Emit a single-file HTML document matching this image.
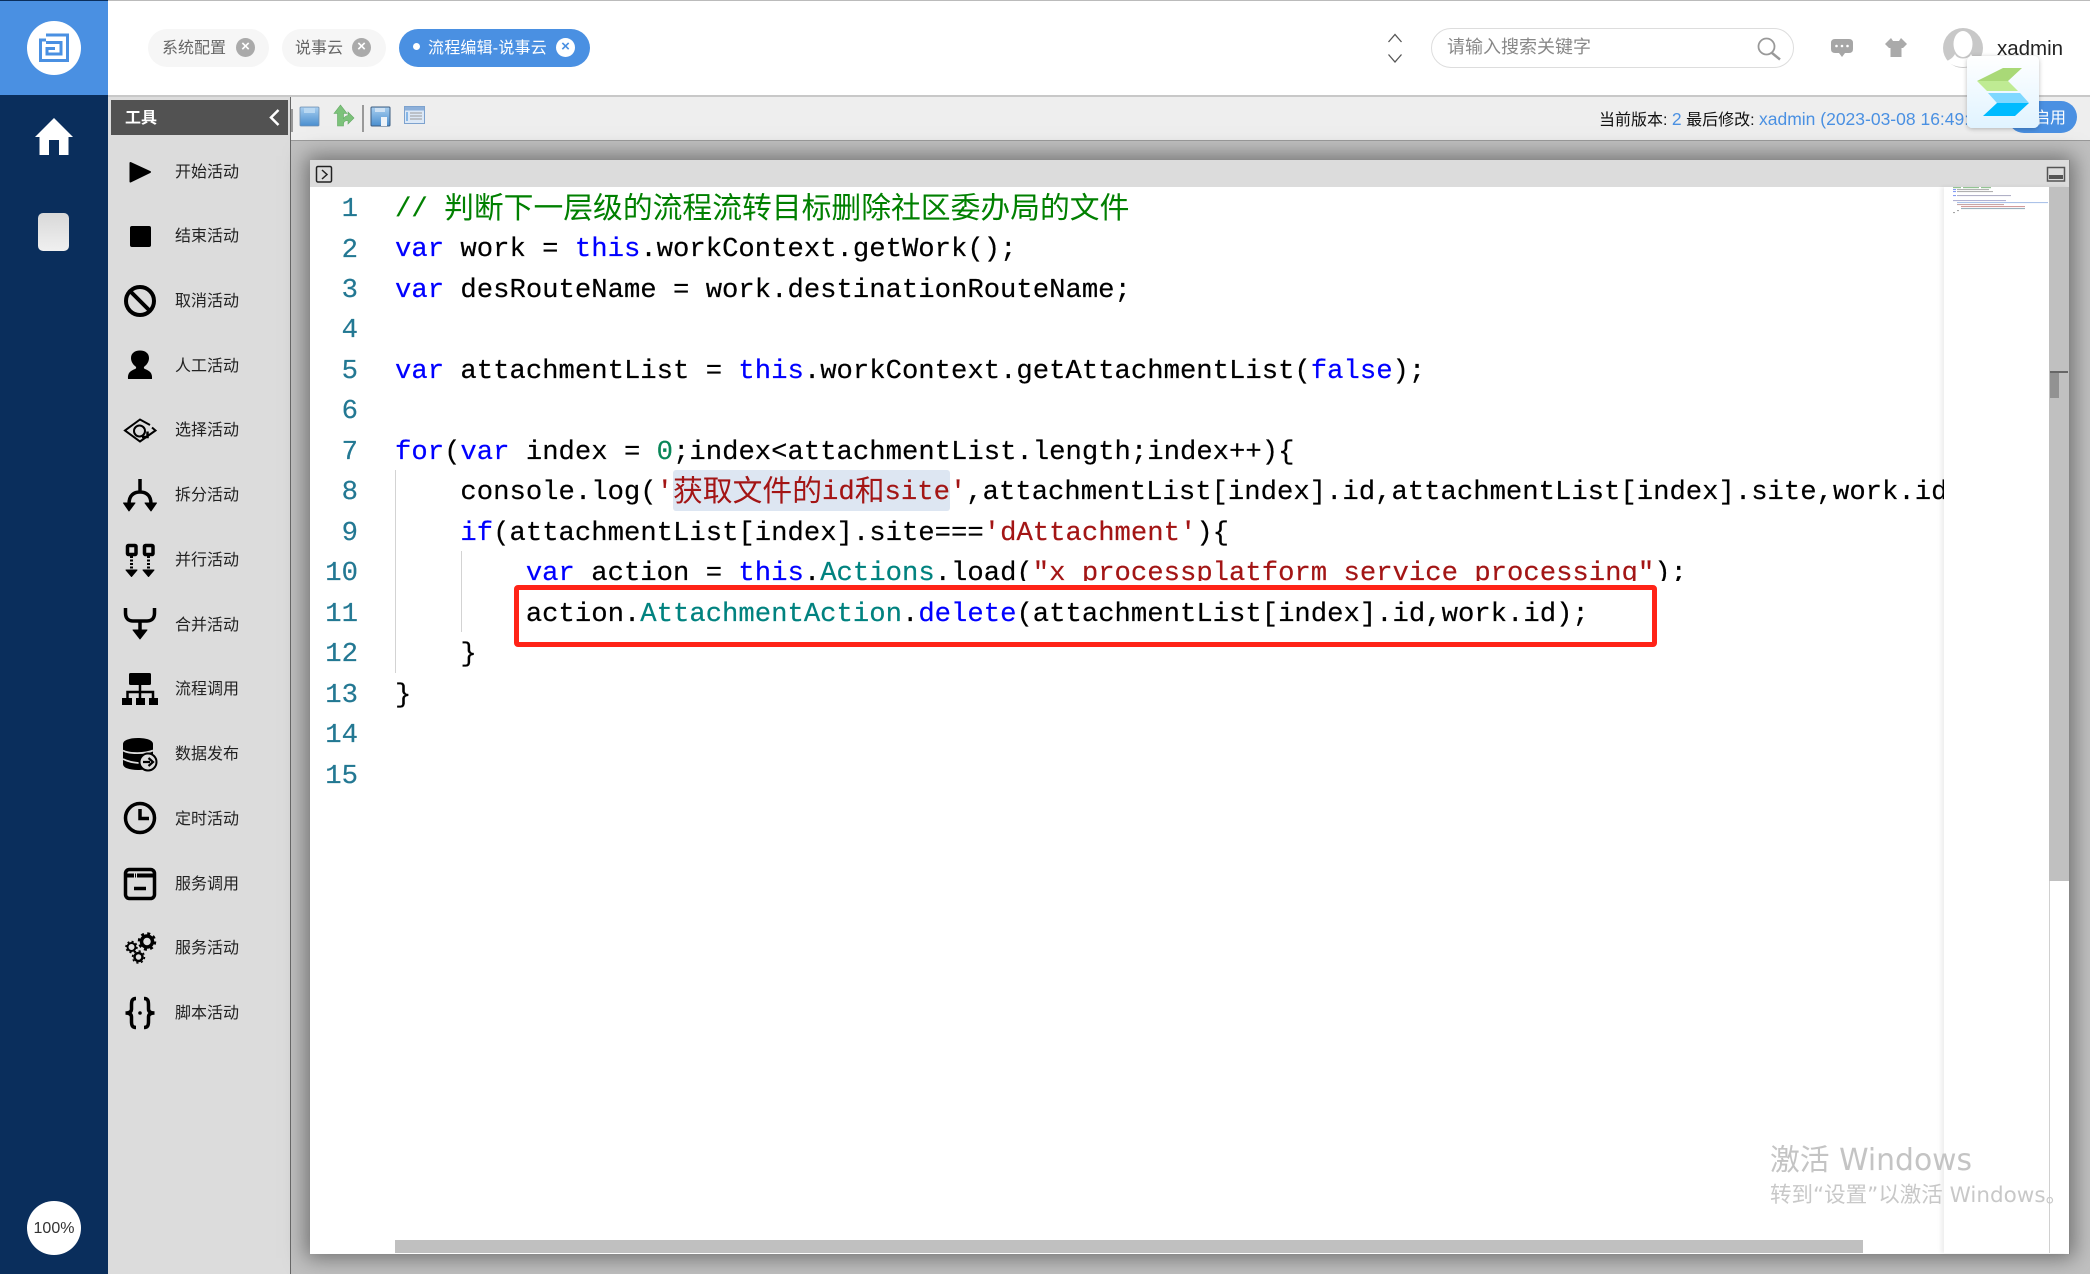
<!DOCTYPE html>
<html lang="zh"><head><meta charset="utf-8"><title>流程编辑-说事云</title>
<style>
html,body{margin:0;padding:0;background:#c0c0c0}
body{width:2090px;height:1274px;position:relative;overflow:hidden;font-family:"Liberation Sans","Noto Sans CJK SC",sans-serif;color:#333}
.a{position:absolute}
.t{position:absolute;white-space:pre;line-height:1}
.tab{position:absolute;top:29px;height:38px;border-radius:19px;background:#f6f6f6}
.tab span{position:absolute;top:10px;font-size:16px;line-height:20px;color:#666;white-space:nowrap}
.x{position:absolute;top:9px;width:19px;height:19px;border-radius:50%;background:#aaa;color:#fff;font-size:15px;line-height:18px;text-align:center;font-weight:bold}
.item{position:absolute;left:175px;font-size:16px;line-height:20px;color:#222;white-space:nowrap}
.ln{position:absolute;left:310px;width:48px;height:40px;text-align:right;font:27.25px/40px "Liberation Mono",monospace;color:#237893;-webkit-text-stroke:.2px #237893}
.code{position:absolute;left:395px;height:40px;white-space:pre;font:27.25px/40px "Liberation Mono","Noto Sans CJK SC",monospace;color:#000;-webkit-text-stroke:.2px}
.c{font-family:"Noto Sans CJK SC",sans-serif;font-size:29.8px;line-height:0;-webkit-text-stroke:0;position:relative;top:1.500px}
.k{color:#0000ff}.g{color:#008000}.s{color:#a31515}.n{color:#098658}.y{color:#00827f}
</style></head><body>

<div class="a" style="left:0;top:0;width:2090px;height:97px;background:#fff"></div>
<div class="a" style="left:0;top:0;width:2090px;height:1px;background:#bbb"></div>
<div class="a" style="left:108px;top:95px;width:1982px;height:2px;background:#c8c8c8"></div>

<!-- left rail -->
<div class="a" style="left:0;top:0;width:108px;height:1274px;background:#0a2e5c"></div>
<div class="a" style="left:0;top:1px;width:108px;height:94px;background:#4a90e2"></div>
<div class="a" style="left:27px;top:21px;width:54px;height:54px;border-radius:50%;background:#fff"></div>
<div class="a" style="left:38px;top:213px;width:31px;height:38px;border-radius:5px;background:linear-gradient(#d8d8d8,#f0f0f0)"></div>
<div class="a" style="left:27px;top:1201px;width:54px;height:54px;border-radius:50%;background:#fff;text-align:center;font-size:16px;line-height:55px;color:#333">100%</div>

<!-- tool panel -->
<div class="a" style="left:108px;top:97px;width:182px;height:1177px;background:#dcdcdc"></div>
<div class="a" style="left:290px;top:97px;width:1px;height:1177px;background:#666"></div>
<div class="a" style="left:111px;top:100px;width:177px;height:35px;background:#525252"></div>
<div class="t" style="left:125px;top:111px;font-size:16px;color:#fff;font-weight:bold">工具</div>

<div class="item" style="top:163px">开始活动</div>
<div class="item" style="top:227px">结束活动</div>
<div class="item" style="top:292px">取消活动</div>
<div class="item" style="top:357px">人工活动</div>
<div class="item" style="top:421px">选择活动</div>
<div class="item" style="top:486px">拆分活动</div>
<div class="item" style="top:551px">并行活动</div>
<div class="item" style="top:616px">合并活动</div>
<div class="item" style="top:680px">流程调用</div>
<div class="item" style="top:745px">数据发布</div>
<div class="item" style="top:810px">定时活动</div>
<div class="item" style="top:875px">服务调用</div>
<div class="item" style="top:939px">服务活动</div>
<div class="item" style="top:1004px">脚本活动</div>

<!-- toolbar -->
<div class="a" style="left:291px;top:97px;width:1799px;height:43px;background:#eee"></div>
<div class="a" style="left:291px;top:140px;width:1799px;height:1px;background:#999"></div>
<div class="t" style="left:1599px;top:111px;font-size:16px;color:#111;width:368px;overflow:hidden">当前版本: <span style="color:#4a90e2;font-size:17.5px">2</span> 最后修改: <span style="color:#4a90e2;font-size:17.5px">xadmin (2023-03-08 16:49:12)</span></div>
<div class="a" style="left:2008px;top:101px;width:69px;height:32px;border-radius:16px;background:#4a90e2"></div>
<div class="t" style="left:2034px;top:111px;font-size:16px;color:#fff">启用</div>

<!-- tabs -->
<div class="tab" style="left:148px;width:121px"><span style="left:14px">系统配置</span><div class="x" style="left:88px">×</div></div>
<div class="tab" style="left:282px;width:104px"><span style="left:13px">说事云</span><div class="x" style="left:70px">×</div></div>
<div class="tab" style="left:399px;width:191px;background:#4a90e2"><span style="left:29px;color:#fff;letter-spacing:.2px">流程编辑-说事云</span><div class="x" style="left:157px;background:#fff;color:#4a90e2">×</div>
<div class="a" style="left:14px;top:14px;width:7px;height:7px;border-radius:50%;background:#fff"></div></div>

<!-- search -->
<div class="a" style="left:1431px;top:28px;width:361px;height:38px;border:1px solid #ddd;border-radius:20px;background:#fff"></div>
<div class="t" style="left:1447px;top:38px;font-size:18px;color:#888">请输入搜索关键字</div>
<div class="t" style="left:1997px;top:39px;font-size:20.5px;color:#222">xadmin</div>

<!-- editor -->
<div class="a" style="left:310px;top:160px;width:1759px;height:1094px;background:#fff;box-shadow:0 0 20px 4px #6f6f6f;border-right:1px solid #888"></div>
<div class="a" style="left:310px;top:160px;width:1759px;height:27px;background:#dcdcdc"></div>

<div class="a" style="left:395px;top:470px;width:1px;height:203px;background:#d3d3d3"></div>
<div class="a" style="left:461px;top:551px;width:1px;height:81px;background:#d3d3d3"></div>
<div class="a" style="left:673px;top:470px;width:277px;height:41px;background:#dde6f2;border-radius:3px"></div>

<div class="ln" style="top:190px">1</div>
<div class="ln" style="top:231px">2</div>
<div class="ln" style="top:271px">3</div>
<div class="ln" style="top:311px">4</div>
<div class="ln" style="top:352px">5</div>
<div class="ln" style="top:392px">6</div>
<div class="ln" style="top:433px">7</div>
<div class="ln" style="top:473px">8</div>
<div class="ln" style="top:514px">9</div>
<div class="ln" style="top:554px">10</div>
<div class="ln" style="top:595px">11</div>
<div class="ln" style="top:635px">12</div>
<div class="ln" style="top:676px">13</div>
<div class="ln" style="top:716px">14</div>
<div class="ln" style="top:757px">15</div>

<div class="a" style="left:395px;top:187px;width:1549px;height:1050px;overflow:hidden">
<div class="code" style="left:0;top:3px"><span class="g">// <span class="c">判断下一层级的流程流转目标删除社区委办局的文件</span></span></div>
<div class="code" style="left:0;top:43px"><span class="k">var</span> work = <span class="k">this</span>.workContext.getWork();</div>
<div class="code" style="left:0;top:84px"><span class="k">var</span> desRouteName = work.destinationRouteName;</div>
<div class="code" style="left:0;top:165px"><span class="k">var</span> attachmentList = <span class="k">this</span>.workContext.getAttachmentList(<span class="k">false</span>);</div>
<div class="code" style="left:0;top:246px"><span class="k">for</span>(<span class="k">var</span> index = <span class="n">0</span>;index&lt;attachmentList.length;index++){</div>
<div class="code" style="left:0;top:286px">    console.log(<span class="s">'<span class="c">获取文件的</span>id<span class="c">和</span>site'</span>,attachmentList[index].id,attachmentList[index].site,work.id);</div>
<div class="code" style="left:0;top:327px">    <span class="k">if</span>(attachmentList[index].site===<span class="s">'dAttachment'</span>){</div>
<div class="code" style="left:0;top:367px;height:27px;overflow:hidden">        <span class="k">var</span> action = <span class="k">this</span>.<span class="y">Actions</span>.load(<span class="s">"x_processplatform_service_processing"</span>);</div>
<div class="code" style="left:0;top:408px">        action.<span class="y">AttachmentAction</span>.<span class="k">delete</span>(attachmentList[index].id,work.id);</div>
<div class="code" style="left:0;top:448px">    }</div>
<div class="code" style="left:0;top:489px">}</div>
</div>

<div class="a" style="left:514px;top:585px;width:1133px;height:52px;border:5px solid #ff2317;border-radius:4px"></div>

<!-- minimap + scrollbars -->
<div class="a" style="left:1944px;top:187px;width:125px;height:1066px;background:#fff;box-shadow:-3px 0 4px rgba(0,0,0,.07)"></div>
<div class="a" style="left:2049px;top:187px;width:1px;height:1066px;background:#d0d0d0"></div>
<div class="a" style="left:2049px;top:187px;width:20px;height:694px;background:#c0c0c0"></div>
<div class="a" style="left:2050px;top:371px;width:18px;height:2px;background:#666"></div>
<div class="a" style="left:2050px;top:373px;width:9px;height:25px;background:#929292"></div>
<div class="a" style="left:395px;top:1240px;width:1468px;height:13px;background:#c0c0c0"></div>

<svg class="a" style="left:0;top:0" width="2090" height="1274" viewBox="0 0 2090 1274">
<!-- logo -->
<g fill="none" stroke="#4a90e2" stroke-width="3"><path d="M46 35H67.500V60.500H40.500V40H46"/><path d="M46 42.500H61V54H47V48.500H55"/></g>
<!-- home -->
<path fill="#fff" d="M54 118L73 137H68.500V155H59V140H49V155H39.500V137H35Z"/>
<!-- chevrons -->
<path d="M278.500 110L271 117.500L278.500 125" fill="none" stroke="#fff" stroke-width="2.500"/>
<path d="M1388.500 42L1395 34.500L1401.500 42M1388.500 54.500L1395 62L1401.500 54.500" fill="none" stroke="#555" stroke-width="1.300"/>
<!-- search icon -->
<circle cx="1766.500" cy="46.500" r="8" fill="none" stroke="#999" stroke-width="1.800"/><path d="M1772 53L1780 59.500" stroke="#999" stroke-width="2.500"/>
<!-- chat -->
<path fill="#a6a6a6" d="M1835 39H1849Q1853 39 1853 43V49Q1853 53 1849 53H1845L1842 57L1839 53H1835Q1831 53 1831 49V43Q1831 39 1835 39Z"/>
<g fill="#fff"><circle cx="1836.500" cy="46" r="1.300"/><circle cx="1842" cy="46" r="1.300"/><circle cx="1847.500" cy="46" r="1.300"/></g>
<!-- shirt -->
<path fill="#aaa" d="M1891 38L1893 41H1899L1901 38L1907 44L1903 48H1901.500V57H1890.500V48H1889L1885 44Z"/>
<!-- avatar -->
<circle cx="1963" cy="48" r="20" fill="#c8c8c8"/>
<ellipse cx="1963" cy="44" rx="9.500" ry="13" fill="#fff"/>
<path d="M1955 54C1957 60 1969 60 1971 54C1973 58 1977 60 1979 61C1975 65 1969 67 1963 67C1957 67 1951 65 1947 61C1949 60 1953 58 1955 54Z" fill="#fff"/>

<!-- tool icons -->
<g fill="#000" stroke="none">
<path d="M130.500 163L150 172L130.500 181.500Z" stroke="#000" stroke-width="2" stroke-linejoin="round"/>
<rect x="130" y="226" width="21" height="21" rx="2"/>
<path d="M128 379C127.500 373 130 371 135 369C136.500 368.500 136.500 367 135 366C132.500 364 131 361 131 358C131 353.500 134.500 350.500 140 350.500C145.500 350.500 149 353.500 149 358C149 361 147.500 364 145 366C143.500 367 143.500 368.500 145 369C150 371 152.500 373 152 379Z"/>
<path d="M123.500 503H135L129 511ZM145 503H156.500L151 511Z" stroke="#000" stroke-width="1" stroke-linejoin="round"/>
<path d="M133 630H147L140 639Z" stroke="#000" stroke-width="1" stroke-linejoin="round"/>
<path d="M126 570H137L131.500 576.500ZM143 570H154L148.500 576.500Z" stroke="#000" stroke-width="1" stroke-linejoin="round"/>
<rect x="129" y="673" width="22" height="12" rx="1.500"/><rect x="122" y="698" width="10" height="7"/><rect x="136" y="698" width="9" height="7"/><rect x="149" y="698" width="9" height="7"/>
<path d="M123 744C123 740 130 738 138 738C146 738 153 740 153 744V764C153 768 146 770 138 770C130 770 123 768 123 764Z"/>
</g>
<g fill="none" stroke="#000">
<circle cx="140" cy="301" r="14" stroke-width="4"/><path d="M130 291L150 311" stroke-width="4"/>
<path d="M150 425L140 419.500L125 430.500L140 441.500L155.500 430.500L152 427.500" stroke-width="2"/><circle cx="139.500" cy="431" r="5.500" stroke-width="2"/>
<path d="M142 437H147.500V431.500" stroke-width="2.500"/>
<path d="M140 479V492M129 504C129 495 134 492 140 492C146 492 151 495 151 504" stroke-width="3.500"/>
<rect x="127.500" y="545.500" width="8.500" height="9" rx="1" stroke-width="3.500"/><rect x="144.500" y="545.500" width="8.500" height="9" rx="1" stroke-width="3.500"/>
<path d="M131.500 556V570M148.500 556V570" stroke-width="3" stroke-dasharray="2 1.500"/>
<path d="M125.500 608V613C125.500 618 128 621 133 621H147C152 621 154.500 618 154.500 613V608M140 621V632" stroke-width="3.500"/>
<path d="M140 685V698M127.500 698V692H153V698" stroke-width="2.500"/>
<circle cx="140" cy="818" r="14.500" stroke-width="3.500"/><path d="M140 809V818.500H149" stroke-width="3.500"/>
<rect x="125.500" y="869.500" width="29" height="29" rx="4" stroke-width="3.500"/><path d="M127 875.500H153" stroke-width="4" stroke-dasharray="7 1 1 1 16 0"/><path d="M134 888.500H146" stroke-width="3.500"/>
<path d="M136 998.500C132 998.500 131.500 1001 131.500 1005V1009C131.500 1012 129 1013 125.500 1013C129 1013 131.500 1014 131.500 1017V1021C131.500 1025 132 1027.500 136 1027.500M144 998.500C148 998.500 148.500 1001 148.500 1005V1009C148.500 1012 151 1013 154.500 1013C151 1013 148.500 1014 148.500 1017V1021C148.500 1025 148 1027.500 144 1027.500" stroke-width="3.500"/>
<circle cx="147" cy="941.500" r="5.500" stroke-width="3.500"/><circle cx="147" cy="941.500" r="8" stroke-width="2.500" stroke-dasharray="3 3.280"/>
<circle cx="131.500" cy="947" r="4" stroke-width="2"/><circle cx="131.500" cy="947" r="5.500" stroke-width="1.500" stroke-dasharray="2 2.300"/>
<circle cx="138.500" cy="957" r="4" stroke-width="2.500"/><circle cx="138.500" cy="957" r="6" stroke-width="1.500" stroke-dasharray="2.200 2.500"/>
</g>
<circle cx="140" cy="1013" r="1.800" fill="#000"/>
<!-- database bands -->
<path d="M123 750.500C129 754 145 754 153 750.500M123 759C129 762 135 763 141 763" stroke="#dcdcdc" stroke-width="1.800" fill="none"/>
<circle cx="148" cy="762" r="8.500" fill="#dcdcdc" stroke="#000" stroke-width="2"/>
<path d="M143 762H150M148.500 758L153 762L148.500 766" stroke="#000" stroke-width="2.200" fill="none"/>

<!-- toolbar icons -->
<rect x="291" y="109" width="2" height="23" fill="#999"/>
<rect x="362" y="105" width="2" height="27" fill="#999"/>
<defs><linearGradient id="b" x1="0" y1="0" x2="0" y2="1"><stop offset="0" stop-color="#a9cff0"/><stop offset="1" stop-color="#4a8ecf"/></linearGradient></defs>
<rect x="300" y="107" width="19" height="19" rx="1" fill="url(#b)" stroke="#6f8fb0" stroke-width=".8"/>
<rect x="304" y="108" width="11" height="5" fill="#b9d8f2"/>
<path d="M340.500 105L347 113.500H343.500V118.500C345 116.500 347 115.500 348 115.500V112L354 118L348 124V120.500C345 120.500 343.500 122 343.500 124V126H337.500V113.500H334Z" fill="#7cc27a" stroke="#62a862" stroke-width=".6"/>
<rect x="371" y="107" width="19" height="19" rx="1" fill="url(#b)" stroke="#3f5d80" stroke-width="1"/>
<rect x="375" y="108" width="10" height="4" fill="#cfe2f4"/><rect x="381" y="117" width="6" height="9" fill="#eef3f8"/>
<rect x="404.500" y="106.500" width="20" height="17" fill="#dce8f6" stroke="#7da2ce"/>
<rect x="405" y="107" width="19" height="3.500" fill="#8db0da"/>
<path d="M410 113H422M410 116H422M410 119H422" stroke="#9a9a9a" stroke-width="1"/>
<path d="M407 112V121" stroke="#6aa5e0" stroke-width="1.500"/>

<!-- editor strip buttons -->
<rect x="316.500" y="166.500" width="15" height="15.500" rx="1.500" fill="none" stroke="#222" stroke-width="1.500"/>
<path d="M322 170L327 174.500L322 179" fill="none" stroke="#222" stroke-width="1.500"/>
<rect x="2047.500" y="167.500" width="17" height="13.500" fill="none" stroke="#555" stroke-width="1.500"/>
<rect x="2049" y="175" width="14" height="4" fill="#555"/>

<!-- minimap -->
<g opacity=".65">
<rect x="1953" y="187" width="8" height="1.200" fill="#5aa65a"/><rect x="1963" y="187" width="16" height="1.200" fill="#5aa65a"/><rect x="1981" y="187" width="10" height="1.200" fill="#5aa65a"/>
<rect x="1953" y="189" width="3" height="1.100" fill="#4466ee"/><rect x="1957" y="189" width="32" height="1.100" fill="#888"/>
<rect x="1953" y="191" width="3" height="1.100" fill="#4466ee"/><rect x="1957" y="191" width="36" height="1.100" fill="#888"/>
<rect x="1953" y="195" width="3" height="1.100" fill="#4466ee"/><rect x="1957" y="195" width="54" height="1.100" fill="#8888aa"/>
<rect x="1953" y="200" width="53" height="1.100" fill="#8888bb"/>
<rect x="1957" y="202" width="91" height="1.100" fill="#7fa3dd"/>
<rect x="1957" y="204" width="47" height="1.100" fill="#aa7777"/>
<rect x="1961" y="206" width="64" height="1.100" fill="#bb6666"/>
<rect x="1961" y="208" width="64" height="1.100" fill="#668899"/>
<rect x="1957" y="210" width="2" height="1.100" fill="#777"/><rect x="1953" y="212" width="2" height="1.100" fill="#777"/>
</g>
</svg>

<!-- floating widget -->
<div class="a" style="left:1967px;top:56px;width:72px;height:72px;border-radius:5px;background:linear-gradient(#fff,#e0f3ff);box-shadow:0 1px 5px rgba(0,0,0,.25)"></div>
<svg class="a" style="left:1967px;top:56px" width="72" height="72" viewBox="1967 56 72 72">
<polygon points="2003,68 2022,68 2008,81 1977,81" fill="#a9d977"/>
<polygon points="1977,81 2008,81 2018,91 1987,91" fill="#bfeb93"/>
<polygon points="1988,93 2020,93 2029,103 1997,103" fill="#7fd8ff"/>
<polygon points="1997,103 2029,103 2015,116 1983,116" fill="#00bbff"/>
</svg>

<!-- watermark -->
<div class="t" style="left:1770px;top:1146px;font-family:'DejaVu Sans','Noto Sans CJK SC',sans-serif;font-size:29.8px;color:#c4c4c4">激活 Windows</div>
<div class="t" style="left:1770px;top:1185px;font-family:'DejaVu Sans','Noto Sans CJK SC',sans-serif;font-size:21.5px;color:#c8c8c8">转到“设置”以激活 Windows。</div>
</body></html>
